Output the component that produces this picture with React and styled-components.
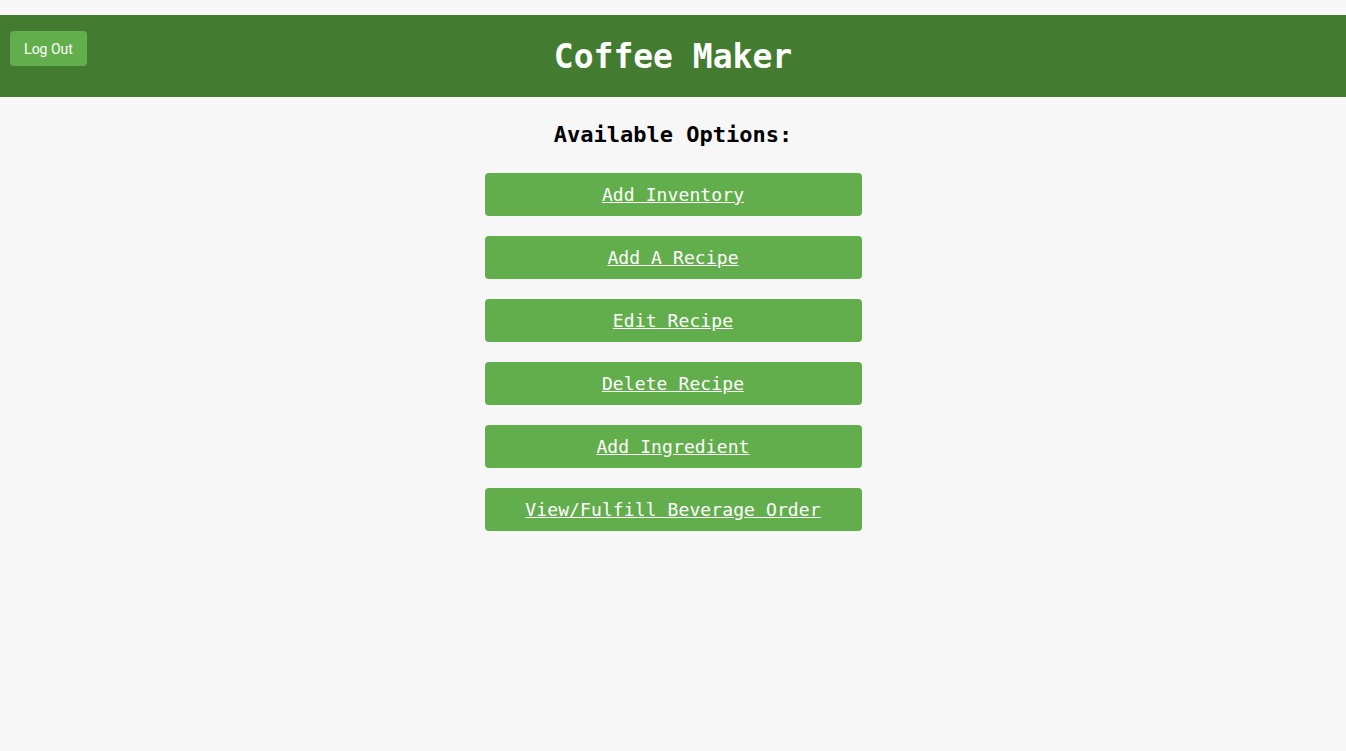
import React from 'react';
import styled, { createGlobalStyle } from 'styled-components';

const options = [
    'Add Inventory',
    'Add A Recipe',
    'Edit Recipe',
    'Delete Recipe',
    'Add Ingredient',
    'View/Fulfill Beverage Order',
];

const App = () => {
    return (
        <>
            <GlobalStyle />
            <Page>
                <Header>
                    <LogoutButton>Log Out</LogoutButton>
                    <Title>Coffee Maker</Title>
                </Header>
                <Main>
                    <Subtitle>Available Options:</Subtitle>
                    <OptionList>
                        {options.map((option) => (
                            <OptionButton key={option} href="#">{option}</OptionButton>
                        ))}
                    </OptionList>
                </Main>
            </Page>
        </>
    );
}

const GlobalStyle = createGlobalStyle`
    html, body {
        margin: 0;
        padding: 0;
        background-color: #f7f7f7;
    }
`;

const Page = styled.div`
    min-height: 751px;
    padding-top: 15px;
    box-sizing: border-box;
    background-color: #f7f7f7;
    font-family: "DejaVu Sans Mono", "Liberation Mono", monospace;
`;

const Header = styled.header`
    position: relative;
    height: 82px;
    background-color: #437c30;
    display: flex;
    align-items: center;
    justify-content: center;
`;

const LogoutButton = styled.button`
    position: absolute;
    left: 10px;
    top: 16px;
    width: 77px;
    height: 35px;
    padding: 0;
    border: none;
    border-radius: 4px;
    background-color: #63ae4c;
    color: #fff;
    font-family: Roboto, "Liberation Sans", Arial, sans-serif;
    font-size: 14px;
    font-weight: 400;
    cursor: pointer;
`;

const Title = styled.h1`
    margin: 0;
    color: #fff;
    font-size: 33px;
    font-weight: bold;
    letter-spacing: 0;
`;

const Main = styled.main`
    display: flex;
    flex-direction: column;
    align-items: center;
    padding-top: 22px;
`;

const Subtitle = styled.h2`
    margin: 0 0 22px;
    font-size: 22px;
    font-weight: bold;
    color: #000;
    line-height: 32px;
`;

const OptionList = styled.div`
    display: flex;
    flex-direction: column;
    gap: 20px;
`;

const OptionButton = styled.a`
    display: flex;
    align-items: center;
    justify-content: center;
    width: 377px;
    height: 43px;
    border-radius: 4px;
    background-color: #63ae4c;
    color: #fff;
    font-size: 18px;
    font-weight: 500;
    text-decoration: underline;
    letter-spacing: 0.1px;
`;

export default App;
